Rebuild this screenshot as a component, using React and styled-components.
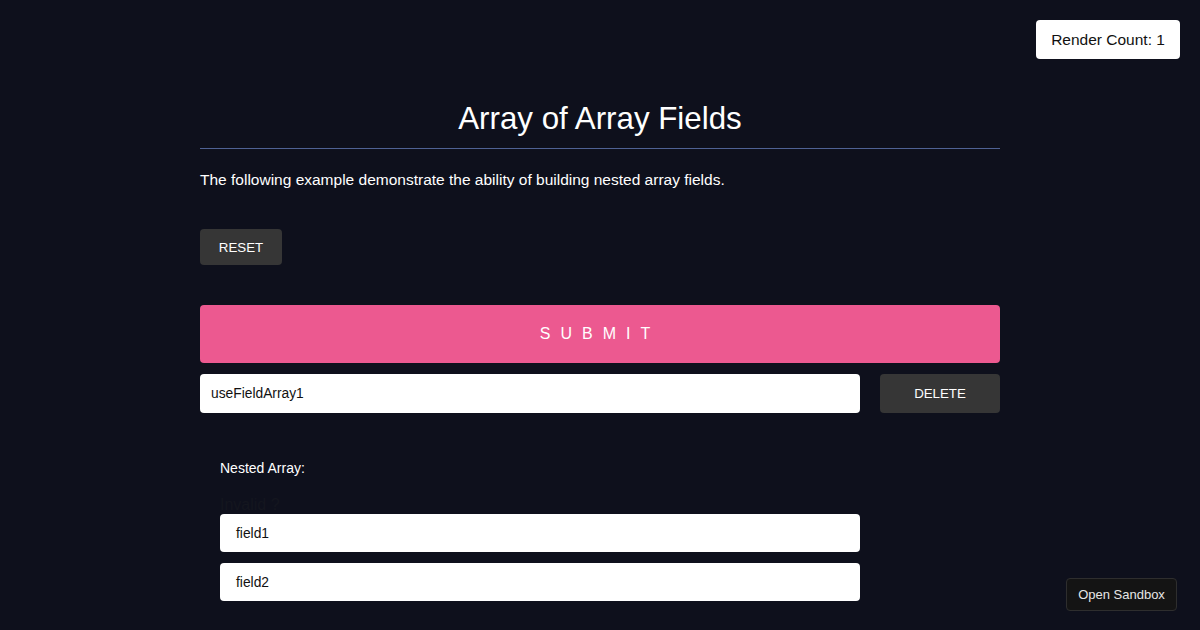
import React from "react";
import styled, { createGlobalStyle } from "styled-components";

const Global = createGlobalStyle`
  html, body { margin: 0; padding: 0; background: #0e101c; }
  body { font-family: "Liberation Sans", Arial, sans-serif; color: #fff; }
  * { box-sizing: border-box; }
`;

const Page = styled.div`
  position: relative;
  width: 1200px;
  height: 630px;
  overflow: hidden;
  background: #0e101c;
`;

const Counter = styled.div`
  position: absolute;
  top: 20px;
  right: 20px;
  width: 144px;
  height: 39px;
  background: #fff;
  color: #111;
  border-radius: 4px;
  font-size: 15.5px;
  display: flex;
  align-items: center;
  justify-content: center;
`;

const Container = styled.div`
  width: 800px;
  margin: 0 auto;
  padding-top: 100px;
  display: flex;
  flex-direction: column;
`;

const Title = styled.h1`
  margin: 0;
  font-size: 31.3px;
  line-height: 37px;
  font-weight: 400;
  text-align: center;
  color: #fff;
  padding-bottom: 11px;
  border-bottom: 1px solid rgb(79, 98, 148);
`;

const Intro = styled.p`
  margin: 22px 0 0;
  font-size: 15.5px;
  line-height: 18px;
  color: #fff;
`;

const SmallButton = styled.button`
  font-family: inherit;
  background: #363636;
  color: #fff;
  border: none;
  border-radius: 4px;
  font-size: 13.3px;
  text-transform: uppercase;
  height: ${(p) => p.$h || 36}px;
  width: ${(p) => p.$w}px;
  padding: 0;
  flex: none;
`;

const ResetWrap = styled.div`
  margin-top: 40px;
`;

const Submit = styled.button`
  margin-top: 40px;
  height: 58px;
  width: 100%;
  border: none;
  border-radius: 4px;
  background: #ec5990;
  color: #fff;
  font-family: inherit;
  font-size: 16px;
  font-weight: 300;
  letter-spacing: 10px;
  text-transform: uppercase;
`;

const Row = styled.div`
  margin-top: 11px;
  display: flex;
  gap: 20px;
`;

const Field = styled.div`
  flex: ${(p) => (p.$grow ? "1 1 auto" : "none")};
  height: ${(p) => p.$h}px;
  background: #fff;
  color: #111;
  border-radius: 4px;
  font-size: 13.8px;
  display: flex;
  align-items: center;
  padding-left: ${(p) => p.$pad}px;
`;

const Nested = styled.div`
  width: 640px;
  margin-left: 20px;
  display: flex;
  flex-direction: column;
`;

const Label = styled.div`
  margin-top: 46px;
  font-size: 14px;
  line-height: 18px;
  color: #fff;
`;

const Hint = styled.div`
  margin-top: 20px;
  font-size: 16px;
  line-height: 16px;
  color: #14161f;
`;

const NestedFields = styled.div`
  margin-top: 1px;
  display: flex;
  flex-direction: column;
  gap: 11px;
`;

const Sandbox = styled.button`
  position: absolute;
  right: 23px;
  bottom: 19px;
  width: 111px;
  height: 33px;
  background: #141414;
  color: #e6e6e6;
  border: 1px solid #2e2e2e;
  border-radius: 4px;
  font-family: inherit;
  font-size: 13px;
  padding: 0;
`;

export default function App() {
  return (
    <Page>
      <Global />
      <Counter>Render Count: 1</Counter>
      <Container>
        <Title>Array of Array Fields</Title>
        <Intro>The following example demonstrate the ability of building nested array fields.</Intro>
        <ResetWrap>
          <SmallButton $w={82}>Reset</SmallButton>
        </ResetWrap>
        <Submit>Submit</Submit>
        <Row>
          <Field $grow $h={39} $pad={11}>useFieldArray1</Field>
          <SmallButton $w={120} $h={39}>Delete</SmallButton>
        </Row>
        <Nested>
          <Label>Nested Array:</Label>
          <Hint>Invalid ?</Hint>
          <NestedFields>
            <Field $h={38} $pad={16}>field1</Field>
            <Field $h={38} $pad={16}>field2</Field>
          </NestedFields>
        </Nested>
      </Container>
      <Sandbox>Open Sandbox</Sandbox>
    </Page>
  );
}
